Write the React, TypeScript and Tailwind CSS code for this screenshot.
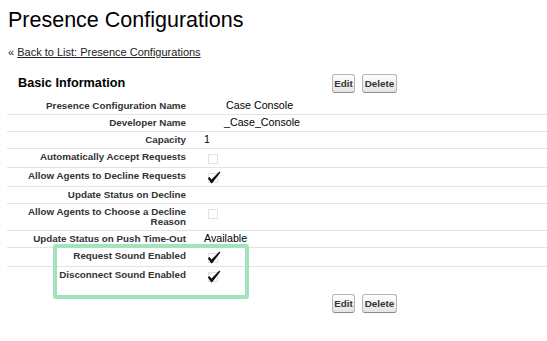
import React from "react"

type Row = {
  label: string
  h: string
  value?: React.ReactNode
}

// dotted checkbox image, optionally with a check mark drawn over it
function CheckImg({ checked }: { checked?: boolean }) {
  return (
    <svg width="14" height="13" viewBox="0 0 14 13" className="block">
      <rect x="1.5" y="2.5" width="9" height="9" fill="none" stroke="#c4c4c4" strokeWidth="1" strokeDasharray="1 1" />
      {checked && (
        <path d="M0.8 7.2 L2.4 5.9 L4.5 8.6 L12.4 0.6 L13.4 1.4 L5.1 12.2 L4.1 12.2 Z" fill="#111" />
      )}
    </svg>
  )
}

function Btn({ label, w }: { label: string; w: string }) {
  return (
    <button
      className={`${w} h-[19px] rounded-[3px] border border-[#b5b5b5] border-b-[#8a8a8a] bg-gradient-to-b from-[#ffffff] to-[#e4e4e4] text-[9.9px] font-bold text-[#333] leading-none flex items-center justify-center`}
    >
      {label}
    </button>
  )
}

function Buttons() {
  return (
    <div className="flex gap-[7px]">
      <Btn label="Edit" w="w-[23px]" />
      <Btn label="Delete" w="w-[35px]" />
    </div>
  )
}

export default function App() {
  const rows: Row[] = [
    { label: "Presence Configuration Name", h: "h-[17px]", value: <span className="pl-[36px]">Case Console</span> },
    { label: "Developer Name", h: "h-[17px]", value: <span className="pl-[34px]">_Case_Console</span> },
    { label: "Capacity", h: "h-[17px]", value: <span className="pl-[14px]">1</span> },
    { label: "Automatically Accept Requests", h: "h-[19px]", value: <div className="pl-[17px] pt-[2px]"><CheckImg /></div> },
    { label: "Allow Agents to Decline Requests", h: "h-[19px]", value: <div className="pl-[17px] pt-[2px]"><CheckImg checked /></div> },
    { label: "Update Status on Decline", h: "h-[17px]" },
    { label: "Allow Agents to Choose a Decline Reason", h: "h-[27px]", value: <div className="pl-[17px] pt-[2px]"><CheckImg /></div> },
    { label: "Update Status on Push Time-Out", h: "h-[17px]", value: <span className="pl-[14px]">Available</span> },
    { label: "Request Sound Enabled", h: "h-[19px]", value: <div className="pl-[17px] pt-[2px]"><CheckImg checked /></div> },
    { label: "Disconnect Sound Enabled", h: "h-[19px]", value: <div className="pl-[17px] pt-[2px]"><CheckImg checked /></div> },
  ]

  return (
    <div className="relative w-[547px] h-[341px] overflow-hidden bg-white text-black font-['Liberation_Sans',Arial,sans-serif]">
      <h1 className="pl-[8px] pt-[7px] text-[21.5px] leading-[26px]">Presence Configurations</h1>
      <div className="pl-[8px] mt-[13px] text-[11px] leading-[13px] text-[#222]">
        « <a href="#" className="underline">Back to List: Presence Configurations</a>
      </div>

      <div className="ml-[7px] mt-[15px]">
        {/* section header */}
        <div className="flex h-[24px]">
          <div className="w-[325px] pl-[11px] pt-[1px] text-[12.7px] leading-[16px] font-bold">Basic Information</div>
          <Buttons />
        </div>

        {rows.map((r, i) => (
          <div
            key={r.label}
            className={`flex items-start ${r.h} ${i < rows.length - 1 ? "border-b border-[#e3e3e3]" : ""}`}
          >
            <div className="w-[183px] shrink-0 pl-[12px] pr-[4px] pt-[3px] text-right text-[9.8px] leading-[10px] font-bold text-[#333]">
              {r.label}
            </div>
            <div className="pt-[1px] text-[10.7px] leading-[13px]">{r.value}</div>
          </div>
        ))}

        <div className="pl-[325px] mt-[8px]">
          <Buttons />
        </div>
      </div>

      {/* highlight annotation */}
      <div className="absolute left-[53px] top-[244px] w-[196px] h-[55px] border-4 border-[#a2e3bc] rounded-[3px]" />
    </div>
  )
}
